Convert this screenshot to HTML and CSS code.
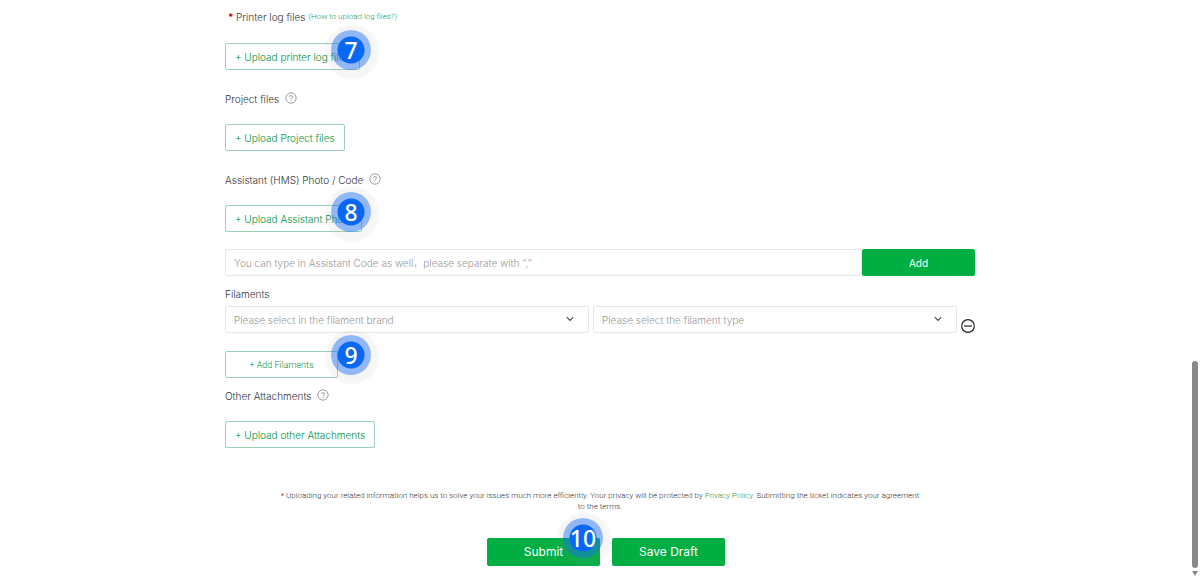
FILE: index.html
```html
<!DOCTYPE html>
<html lang="en">
<head>
<meta charset="utf-8">
<meta name="viewport" content="width=device-width, initial-scale=1">
<title>Submit a ticket</title>
<link rel="stylesheet" href="styles.css">
</head>
<body>
<svg class="defs" aria-hidden="true">
  <symbol id="help" viewBox="0 0 12 12"><circle cx="6" cy="6" r="5.2" fill="none" stroke="currentColor" stroke-width=".7"/><path d="M4.6 4.9a1.4 1.4 0 1 1 2.2 1.2c-.5.3-.8.5-.8 1.1M6 8.1v.8" fill="none" stroke="currentColor" stroke-width=".8"/></symbol>
  <symbol id="chevron" viewBox="0 0 10 10"><path d="M1.8 3.2 5 6.4l3.2-3.2" fill="none" stroke="currentColor" stroke-width="1.2"/></symbol>
</svg>
<form class="ticket">
  <div class="label"><span class="required">*</span>Printer log files <a class="hint" href="#">(How to upload log files?)</a></div>
  <div class="action first">
    <button type="button" class="upload">+ Upload printer log files</button>
    <span class="marker">7</span>
  </div>

  <div class="label spaced">Project files <svg class="help"><use href="#help"/></svg></div>
  <div class="action">
    <button type="button" class="upload">+ Upload Project files</button>
  </div>

  <div class="label spaced">Assistant (HMS) Photo / Code <svg class="help"><use href="#help"/></svg></div>
  <div class="action">
    <button type="button" class="upload">+ Upload Assistant Photo</button>
    <span class="marker">8</span>
  </div>
  <div class="code-row">
    <input class="field" type="text" aria-label="Assistant Code" placeholder="You can type in Assistant Code as well，please separate with “,”">
    <button type="button" class="solid add">Add</button>
  </div>

  <div class="label near">Filaments</div>
  <div class="filaments">
    <div class="select">
      <select class="field" aria-label="Filament brand"><option>Please select in the filament brand</option></select>
      <svg class="chevron"><use href="#chevron"/></svg>
    </div>
    <div class="select">
      <select class="field" aria-label="Filament type"><option>Please select the filament type</option></select>
      <svg class="chevron"><use href="#chevron"/></svg>
    </div>
    <button type="button" class="remove" aria-label="Remove filament">
      <svg viewBox="0 0 14 14"><path d="M3 7h8" stroke="currentColor" stroke-width="1.2"/><circle cx="7" cy="7" r="6.3" fill="none" stroke="currentColor" stroke-width="1.2"/></svg>
    </button>
  </div>
  <div class="action after-select">
    <button type="button" class="upload small">+ Add Filaments</button>
    <span class="marker level">9</span>
  </div>

  <div class="label near">Other Attachments <svg class="help"><use href="#help"/></svg></div>
  <div class="action">
    <button type="button" class="upload">+ Upload other Attachments</button>
  </div>

  <p class="notice">* Uploading your related information helps us to solve your issues much more efficiently. Your privacy will be protected by <a href="#">Privacy Policy</a>. Submitting the ticket indicates your agreement to the terms.</p>
  <div class="submit-row">
    <div class="submit">
      <button type="submit" class="solid large">Submit</button>
      <span class="marker">10</span>
    </div>
    <button type="button" class="solid large">Save Draft</button>
  </div>
</form>
<div class="scrollbar" aria-hidden="true">
  <span class="thumb"></span>
  <svg viewBox="0 0 6 5"><path d="M0 0h6L3 5z" fill="#888"/></svg>
</div>
</body>
</html>
```
FILE: styles.css
```css
* { box-sizing: border-box; }

body {
  margin: 0;
  background: #fff;
  color: #555;
  font: 300 10px/18px Inter, "Noto Sans CJK SC", sans-serif;
}

button, input, select { font: inherit; }
button { cursor: pointer; }
a { color: #159a50; text-decoration: none; }

.defs { position: absolute; width: 0; height: 0; }

.ticket {
  max-width: 750px;
  margin: 0 auto;
  padding: 8px 0 11px;
}

.label { display: flex; align-items: center; height: 18px; color: #333; }
.spaced { margin-top: 20px; }
.near { margin-top: 9px; }
.required { width: 11px; padding-left: 3px; color: #c00; font-weight: 700; }
.hint { margin-left: 3px; font: 300 8px/18px Roboto, sans-serif; }
.help { width: 12px; height: 12px; margin: 0 0 2px 6px; color: #777; }

.action { position: relative; display: flex; margin-top: 16px; }
.first { margin-top: 17px; }
.after-select { margin-top: 18px; }

.upload {
  height: 27px;
  padding: 0 9px;
  border: 1px solid #9bd0b4;
  border-radius: 2px;
  background: #fff;
  color: #008f3c;
}
.small { width: 113px; font: 300 9px/18px Roboto, sans-serif; }

.marker {
  position: absolute;
  left: 106px;
  top: -13px;
  display: grid;
  place-items: center;
  width: 40px;
  height: 40px;
  border-radius: 50%;
  background: radial-gradient(circle, #0868f5 13px, rgba(36, 112, 238, .5) 14px);
  box-shadow: 1px 2px 2px 7px rgba(150, 155, 150, .09);
  color: #fff;
  font: 500 23px/40px "Noto Sans", sans-serif;
  pointer-events: none;
}
.level { top: -16px; }

.code-row { display: flex; margin-top: 17px; }
.field {
  flex: 1;
  width: 100%;
  min-width: 0;
  height: 27px;
  padding: 0 8px;
  border: 1px solid #e6e6e6;
  border-radius: 2px;
  background: #fff;
  color: #999;
  appearance: none;
}
.field::placeholder { color: #999; opacity: 1; }

.solid {
  width: 113px;
  border: 0;
  border-radius: 2px;
  background: #00ae42;
  color: #fff;
  font-weight: 400;
}
.add { height: 27px; }
.large { height: 28px; font-size: 12px; }

.filaments { display: flex; gap: 4px; margin-top: 3px; }
.select { position: relative; display: flex; flex: 1; }
.chevron {
  position: absolute;
  right: 14px;
  top: 8px;
  width: 10px;
  height: 10px;
  color: #444;
  pointer-events: none;
}
.remove {
  align-self: flex-end;
  width: 14px;
  height: 14px;
  padding: 0;
  border: 0;
  background: none;
  color: #222;
}
.remove svg { display: block; }

.notice {
  max-width: 640px;
  margin: 42px auto 26px;
  font: 300 8px/11px Roboto, sans-serif;
  text-align: center;
  color: #333;
}

.submit-row { display: flex; justify-content: center; gap: 12px; padding-left: 12px; }
.submit { position: relative; display: flex; }
.submit .marker { left: 76px; top: -20px; }

.scrollbar {
  position: fixed;
  right: 2px;
  bottom: 1px;
  display: flex;
  flex-direction: column;
  gap: 3px;
  width: 6px;
}
.thumb { height: 207px; border-radius: 3px; background: #888; }
.scrollbar svg { width: 6px; height: 5px; }
```
